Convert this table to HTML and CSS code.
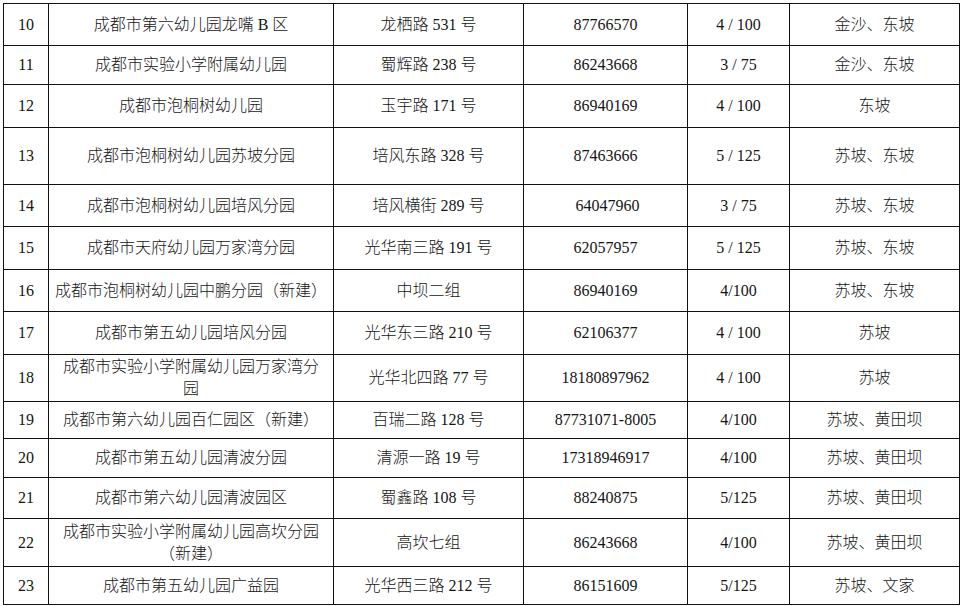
FILE: index.html
```html
<!DOCTYPE html>
<html lang="zh-CN">
<head>
<meta charset="utf-8">
<title>幼儿园名单</title>
<link rel="stylesheet" href="styles.css">
</head>
<body>
<div class="sheet">
<table class="list">
<colgroup>
<col class="c-no"><col class="c-name"><col class="c-addr"><col class="c-tel"><col class="c-cls"><col class="c-area">
</colgroup>
<tbody>
<tr><td>10</td><td>成都市第六幼儿园龙嘴 B 区</td><td>龙栖路 531 号</td><td>87766570</td><td>4 / 100</td><td>金沙、东坡</td></tr>
<tr><td>11</td><td>成都市实验小学附属幼儿园</td><td>蜀辉路 238 号</td><td>86243668</td><td>3 / 75</td><td>金沙、东坡</td></tr>
<tr><td>12</td><td>成都市泡桐树幼儿园</td><td>玉宇路 171 号</td><td>86940169</td><td>4 / 100</td><td>东坡</td></tr>
<tr><td>13</td><td>成都市泡桐树幼儿园苏坡分园</td><td>培风东路 328 号</td><td>87463666</td><td>5 / 125</td><td>苏坡、东坡</td></tr>
<tr><td>14</td><td>成都市泡桐树幼儿园培风分园</td><td>培风横街 289 号</td><td class="pre"> 64047960</td><td>3 / 75</td><td>苏坡、东坡</td></tr>
<tr><td>15</td><td>成都市天府幼儿园万家湾分园</td><td>光华南三路 191 号</td><td>62057957</td><td>5 / 125</td><td>苏坡、东坡</td></tr>
<tr><td>16</td><td>成都市泡桐树幼儿园中鹏分园（新建）</td><td>中坝二组</td><td>86940169</td><td>4/100</td><td>苏坡、东坡</td></tr>
<tr><td>17</td><td>成都市第五幼儿园培风分园</td><td>光华东三路 210 号</td><td>62106377</td><td>4 / 100</td><td>苏坡</td></tr>
<tr><td>18</td><td>成都市实验小学附属幼儿园万家湾分<br>园</td><td>光华北四路 77 号</td><td>18180897962</td><td>4 / 100</td><td>苏坡</td></tr>
<tr><td>19</td><td>成都市第六幼儿园百仁园区（新建）</td><td>百瑞二路 128 号</td><td>87731071-8005</td><td>4/100</td><td>苏坡、黄田坝</td></tr>
<tr><td>20</td><td>成都市第五幼儿园清波分园</td><td>清源一路 19 号</td><td>17318946917</td><td>4/100</td><td>苏坡、黄田坝</td></tr>
<tr><td>21</td><td>成都市第六幼儿园清波园区</td><td>蜀鑫路 108 号</td><td>88240875</td><td>5/125</td><td>苏坡、黄田坝</td></tr>
<tr><td>22</td><td>成都市实验小学附属幼儿园高坎分园<br>（新建）</td><td>高坎七组</td><td>86243668</td><td>4/100</td><td>苏坡、黄田坝</td></tr>
<tr><td>23</td><td>成都市第五幼儿园广益园</td><td>光华西三路 212 号</td><td>86151609</td><td>5/125</td><td>苏坡、文家</td></tr>
</tbody>
</table>
</div>
</body>
</html>
```

FILE: styles.css
```css
html, body {
  margin: 0;
  padding: 0;
  background: #fff;
}

.sheet {
  padding: 3px 0 0 3px;
}

.list {
  border-collapse: collapse;
  table-layout: fixed;
  width: 956px;
  font-family: "Liberation Serif", "Noto Sans CJK SC", serif;
  font-size: 16px;
  line-height: 22px;
  font-weight: 300;
  color: #151515;
}

.list td {
  border: 1px solid #111;
  padding: 0;
  text-align: center;
  vertical-align: middle;
  white-space: nowrap;
}

.list td.pre {
  white-space: pre;
}

.c-no { width: 45px; }
.c-name { width: 285px; }
.c-addr { width: 190px; }
.c-tel { width: 164px; }
.c-cls { width: 102px; }
.c-area { width: 170px; }

.list tr:nth-child(1) { height: 42px; }
.list tr:nth-child(2) { height: 39px; }
.list tr:nth-child(3) { height: 43px; }
.list tr:nth-child(4) { height: 57px; }
.list tr:nth-child(5) { height: 42px; }
.list tr:nth-child(6) { height: 43px; }
.list tr:nth-child(7) { height: 42px; }
.list tr:nth-child(8) { height: 43px; }
.list tr:nth-child(9) { height: 47px; }
.list tr:nth-child(10) { height: 37px; }
.list tr:nth-child(11) { height: 39px; }
.list tr:nth-child(12) { height: 41px; }
.list tr:nth-child(13) { height: 48px; }
.list tr:nth-child(14) { height: 38px; }
```
